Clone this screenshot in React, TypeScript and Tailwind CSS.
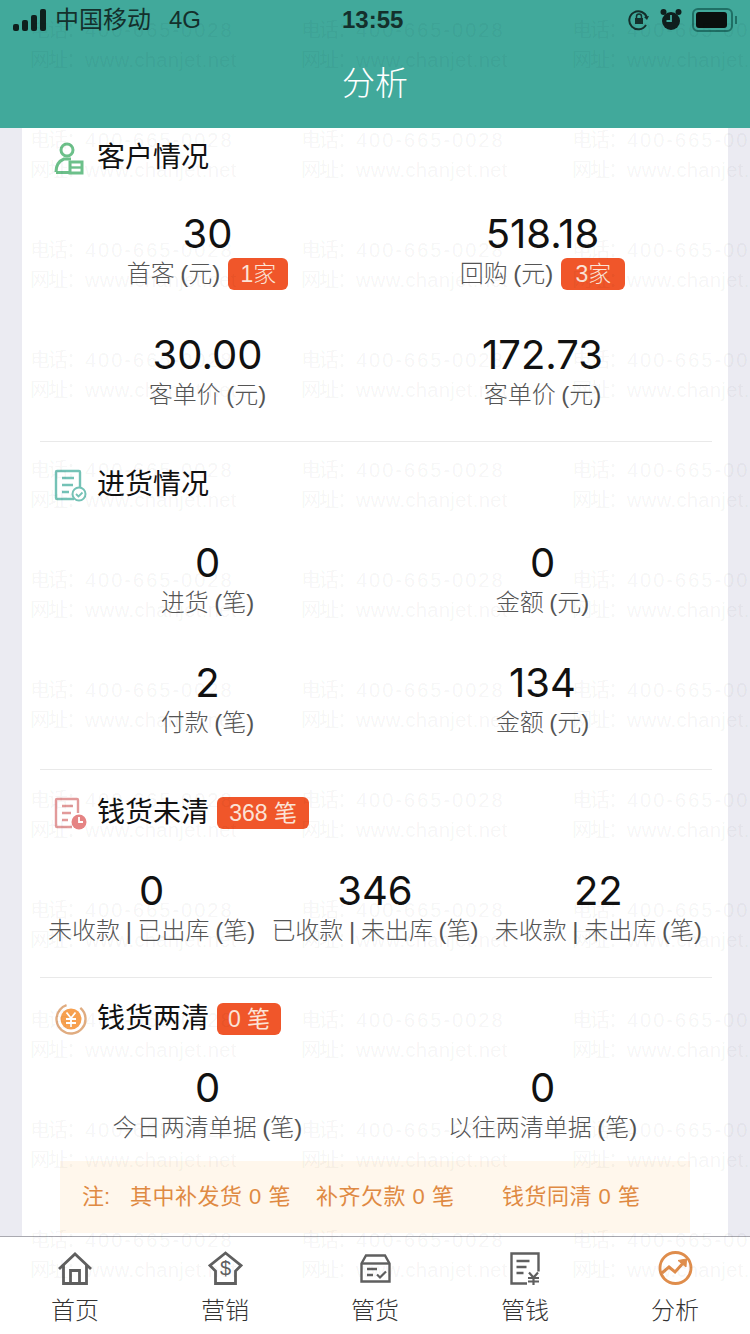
import React from "react";

const FONT = "font-['Liberation_Sans','Noto_Sans_CJK_SC',sans-serif]";

function Badge({ text, className = "" }: { text: string; className?: string }) {
  return (
    <span className={`flex h-[32px] items-center justify-center rounded-[6px] bg-[#f0562a] text-[23px] leading-none text-[#fbe3d6] ${className}`}>
      {text}
    </span>
  );
}

function Stat({ value, label, badge, badgeW }: { value: string; label: string; badge?: string; badgeW?: string }) {
  return (
    <div className="flex flex-col items-center">
      <div className="h-[40px] font-['Inter'] text-[40px] leading-[40px] text-[#111]">{value}</div>
      <div className="flex h-[40px] items-center gap-[8px] whitespace-nowrap text-[24px] font-light leading-none text-[#555] [word-spacing:-1px]">
        <span>{label}</span>
        {badge && <Badge text={badge} className={badgeW} />}
      </div>
    </div>
  );
}

function Title({ icon, text, badge, badgeW }: { icon: React.ReactNode; text: string; badge?: string; badgeW?: string }) {
  return (
    <div className="flex h-[56px] items-center">
      <div className="ml-[14px] flex w-[43px] items-center">{icon}</div>
      <span className="text-[28px] font-normal leading-none text-[#111]">{text}</span>
      {badge && <Badge text={badge} className={`ml-[8px] ${badgeW}`} />}
    </div>
  );
}

function Divider() {
  return <div className="mr-[-2px] h-px bg-[#e9e9e9]" />;
}

const IconCustomer = (
  <svg width="30" height="33" viewBox="0 0 30 33" fill="none" stroke="#6cc08a" strokeWidth="3">
    <circle cx="13" cy="8" r="6" />
    <path d="M2 30c0-7 3-11 8-13h7" />
    <path d="M2 30.500h13" />
    <rect x="16" y="20" width="12" height="11" fill="#fff" />
    <path d="M16 25.500h12" strokeWidth="2.400" />
  </svg>
);
const IconStock = (
  <svg width="33" height="33" viewBox="0 0 33 33" fill="none" stroke="#74c2b6" strokeWidth="2.400">
    <path d="M20 30H3a1 1 0 0 1-1-1V3a1 1 0 0 1 1-1h22a1 1 0 0 1 1 1v15" />
    <path d="M8 9h12M8 16h11M8 23h7" />
    <circle cx="25" cy="25" r="6.500" strokeWidth="2" />
    <path d="M22 25l2.500 2.500 4-4" strokeWidth="1.800" />
  </svg>
);
const IconPending = (
  <svg width="33" height="33" viewBox="0 0 33 33" fill="none" stroke="#e29a9a" strokeWidth="2.400">
    <path d="M18 30H3a1 1 0 0 1-1-1V3a1 1 0 0 1 1-1h20a1 1 0 0 1 1 1v13" />
    <path d="M8 9h11M8 16h9M8 23h6" />
    <circle cx="25" cy="25" r="7.500" fill="#e58383" stroke="none" />
    <path d="M25 20v5h4" stroke="#fff" strokeWidth="1.800" />
  </svg>
);
const IconYen = (
  <svg width="34" height="34" viewBox="0 0 34 34" fill="none">
    <circle cx="17" cy="17" r="14.500" stroke="#e0ac80" strokeWidth="2.400" strokeDasharray="76 15" transform="rotate(-50 17 17)" />
    <circle cx="17" cy="17" r="10.500" fill="#f7a04f" />
    <path d="M12.500 10.500L17 16l4.500-5.500M12 17h10M12 21h10M17 16v9" stroke="#fff" strokeWidth="1.800" />
  </svg>
);

const tabStroke = "#5f5f5f";
const TabHome = (
  <svg width="34" height="33" viewBox="0 0 34 33" fill="none" stroke={tabStroke} strokeWidth="2.800">
    <path d="M1 17L17 2l16 15" />
    <path d="M5.500 13v18.500h23V13" />
    <path d="M12.500 31.500V18.500h9v13" />
  </svg>
);
const TabMarket = (
  <svg width="35" height="34" viewBox="0 0 35 34" fill="none" stroke={tabStroke} strokeWidth="2.800">
    <path d="M17.500 2L2 14.500 7.500 20v12.500h20V20l5.500-5.500z" />
    <text x="17.500" y="24" textAnchor="middle" fontSize="20" fontFamily="Liberation Sans" fill={tabStroke} stroke="none">$</text>
  </svg>
);
const TabGoods = (
  <svg width="31" height="29" viewBox="0 0 31 29" fill="none" stroke={tabStroke} strokeWidth="2.400" className="mb-[2px]">
    <path d="M6 1.500h19l4.500 8v18H1.500v-18z" />
    <path d="M1.500 9.500h28" />
    <path d="M7 15h10M7 21h6" />
    <path d="M17 20.500l3 3 6-6" strokeWidth="2.200" />
  </svg>
);
const TabMoney = (
  <svg width="30" height="33" viewBox="0 0 30 33" fill="none" stroke={tabStroke} strokeWidth="2.400">
    <path d="M17 31.500H1.500v-30h27v18" />
    <path d="M6.500 9h13M6.500 15h10M6.500 21h7" strokeWidth="2.600" />
    <path d="M19 20.500l4.500 5 4.500-5M18 26h11M18 29.500h11M23.500 25v8" strokeWidth="2.200" />
  </svg>
);
const TabAnalysis = (
  <svg width="35" height="34" viewBox="0 0 35 34" fill="none" stroke="#df8d4c" strokeWidth="2.800">
    <circle cx="17.500" cy="17" r="15.500" />
    <path d="M4 22l7-6 6 5 9-10" strokeWidth="3" />
    <path d="M20 9.500l8.500-1.500-.5 8z" fill="#df8d4c" strokeWidth="1" />
  </svg>
);

function Tab({ icon, label }: { icon: React.ReactNode; label: string }) {
  return (
    <div className="flex w-[150px] flex-col items-center">
      <div className="flex h-[36px] items-end justify-center">{icon}</div>
      <div className="mt-[12px] text-[24px] font-light leading-[28px] text-[#333]">{label}</div>
    </div>
  );
}

function Watermark() {
  const rows = Array.from({ length: 12 }, (_, i) => i);
  return (
    <div className={`pointer-events-none absolute inset-0 overflow-hidden pt-[15px] text-[20px] leading-[30px] text-[#000]/[0.05] ${FONT}`}>
      {rows.map((r) => (
        <div key={r} className="flex h-[110px] pl-[30px]">
          {[0, 1, 2].map((c) => (
            <div key={c} className="w-[271px] shrink-0 whitespace-nowrap">
              <div className="flex">
                <span className="w-[55px] tracking-[-2px]">电话：</span>
                <span className="tracking-[2px]">400-665-0028</span>
              </div>
              <div className="flex">
                <span className="w-[55px] tracking-[-2px]">网址：</span>
                <span className="tracking-[0.4px]">www.chanjet.net</span>
              </div>
            </div>
          ))}
        </div>
      ))}
    </div>
  );
}

export default function App() {
  return (
    <div className={`relative flex h-[1334px] w-[750px] flex-col overflow-hidden bg-[#ebebf2] ${FONT}`}>
      <header className="h-[128px] shrink-0 bg-[#41a99b]">
        <div className="relative flex h-[40px] items-center px-[13px] text-[24px] leading-none text-[#14302c]">
          <svg width="34" height="22" viewBox="0 0 34 22" fill="#0f1f1d">
            <rect x="0" y="15" width="6" height="7" rx="2" />
            <rect x="9" y="11" width="6" height="11" rx="2" />
            <rect x="18" y="6" width="6" height="16" rx="2" />
            <rect x="27" y="0" width="6" height="22" rx="2" />
          </svg>
          <span className="ml-[8px]">中国移动</span>
          <span className="ml-[18px]">4G</span>
          <span className="absolute left-[342px] font-['Liberation_Sans'] font-bold">13:55</span>
          <div className="ml-auto flex items-center">
            <svg width="22" height="24" viewBox="0 0 22 24" fill="none" stroke="#14302c" strokeWidth="2">
              <path d="M18 17a9 9 0 1 1 1-7" />
              <path d="M21 8l-2 4-3-3z" fill="#14302c" stroke="none" />
              <rect x="7" y="10" width="8" height="6" fill="#14302c" stroke="none" />
              <path d="M8.500 10V8.500a2.500 2.500 0 0 1 5 0V10" strokeWidth="1.500" />
            </svg>
            <svg className="ml-[10px]" width="22" height="24" viewBox="0 0 22 24" fill="#0f1f1d">
              <circle cx="11" cy="13" r="9" />
              <circle cx="3.500" cy="4" r="3" />
              <circle cx="18.500" cy="4" r="3" />
              <path d="M11 7v6H6.500" stroke="#41a99b" strokeWidth="1.800" fill="none" />
            </svg>
            <div className="ml-[10px] flex items-center">
              <div className="flex h-[24px] w-[41px] items-center rounded-[6px] border-2 border-[#1f6f65] p-[2px]">
                <div className="h-full w-[31px] rounded-[3px] bg-[#0a0f0e]" />
              </div>
              <div className="ml-[2px] h-[8px] w-[2px] bg-[#1f6f65]" />
            </div>
          </div>
        </div>
        <div className="flex h-[88px] items-center justify-center pb-[2px] text-[33px] font-light leading-none text-white">分析</div>
      </header>

      <main className="mx-[22px] flex-1 bg-white px-[18px]">
        <div className="pt-[2px]">
          <Title icon={IconCustomer} text="客户情况" />
        </div>
        <div className="grid grid-cols-2 gap-y-[41px] pt-[28px] pb-[26px]">
          <Stat value="30" label="首客 (元)" badge="1家" badgeW="w-[60px]" />
          <Stat value="518.18" label="回购 (元)" badge="3家" badgeW="w-[64px]" />
          <Stat value="30.00" label="客单价 (元)" />
          <Stat value="172.73" label="客单价 (元)" />
        </div>
        <Divider />

        <div className="pt-[15px]">
          <Title icon={IconStock} text="进货情况" />
        </div>
        <div className="grid grid-cols-2 gap-y-[40px] pt-[30px] pb-[26px]">
          <Stat value="0" label="进货 (笔)" />
          <Stat value="0" label="金额 (元)" />
          <Stat value="2" label="付款 (笔)" />
          <Stat value="134" label="金额 (元)" />
        </div>
        <Divider />

        <div className="pt-[15px]">
          <Title icon={IconPending} text="钱货未清" badge="368 笔" badgeW="w-[92px]" />
        </div>
        <div className="grid grid-cols-3 pt-[30px] pb-[26px]">
          <Stat value="0" label="未收款 | 已出库 (笔)" />
          <Stat value="346" label="已收款 | 未出库 (笔)" />
          <Stat value="22" label="未收款 | 未出库 (笔)" />
        </div>
        <Divider />

        <div className="pt-[13px]">
          <Title icon={IconYen} text="钱货两清" badge="0 笔" badgeW="w-[64px]" />
        </div>
        <div className="grid grid-cols-2 pt-[21px]">
          <Stat value="0" label="今日两清单据 (笔)" />
          <Stat value="0" label="以往两清单据 (笔)" />
        </div>
        <div className="mx-[20px] mt-[13px] flex h-[72px] items-center bg-[#fff7ec] pl-[22px] text-[22px] leading-none whitespace-nowrap text-[#df8a43]">
          <span className="w-[48px]">注:</span>
          <span className="w-[186px] tracking-[0.5px]">其中补发货 0 笔</span>
          <span className="w-[186px] tracking-[0.5px]">补齐欠款 0 笔</span>
          <span className="tracking-[0.5px]">钱货同清 0 笔</span>
        </div>
      </main>

      <nav className="flex h-[98px] shrink-0 border-t border-[#a9a9b0] bg-white pt-[12px]">
        <Tab icon={TabHome} label="首页" />
        <Tab icon={TabMarket} label="营销" />
        <Tab icon={TabGoods} label="管货" />
        <Tab icon={TabMoney} label="管钱" />
        <Tab icon={TabAnalysis} label="分析" />
      </nav>

      <Watermark />
    </div>
  );
}
